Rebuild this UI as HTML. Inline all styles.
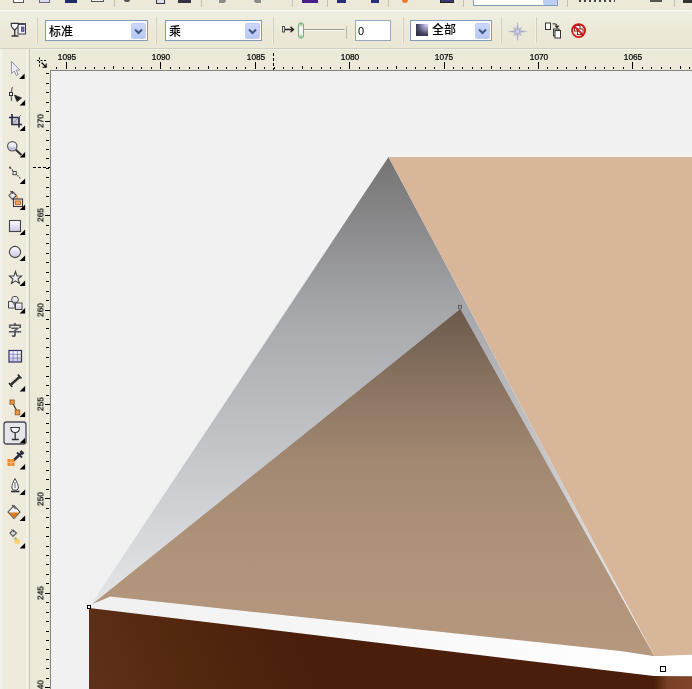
<!DOCTYPE html>
<html lang="zh">
<head>
<meta charset="utf-8">
<title>CorelDRAW</title>
<style>
html,body{margin:0;padding:0;}
body{width:692px;height:689px;overflow:hidden;background:#ECE9D8;position:relative;font-family:"Liberation Sans","Noto Sans CJK SC",sans-serif;}
#top{position:absolute;left:0;top:0;width:692px;height:10px;background:#ECE9D8;overflow:hidden;}
#top i{position:absolute;display:block;}
#prop{position:absolute;left:0;top:10px;width:692px;height:39px;background:linear-gradient(#F1EFE4,#ECE9D8 50%,#EAE7D5);border-top:1px solid #F9F8F3;box-sizing:border-box;border-bottom:1px solid #D3D0BF;}
.combo{position:absolute;top:9px;height:21px;box-sizing:border-box;border:1px solid #7F9DB9;background:#fff;font-size:12px;line-height:18px;color:#000;font-weight:500;}
.combo span{position:absolute;left:3px;top:1.5px;will-change:transform;}
.dd{position:absolute;right:1px;top:2px;width:15px;height:16px;border-radius:1.5px;background:linear-gradient(#CBD8F9,#B7C8F4);border:1px solid #BFCEF6;box-sizing:border-box;}
.dd svg{position:absolute;left:2px;top:4px;}
.sep{position:absolute;top:6px;width:1px;height:26px;background:#D2CFBE;border-left:1px solid #F2F0E6;}
#hr{position:absolute;left:30px;top:49px;width:662px;height:21px;background:#ECE9D8;overflow:hidden;box-shadow:inset 0 1px 0 #F4F3EB}
#vr{position:absolute;left:30px;top:70px;width:20px;height:619px;background:#ECE9D8;overflow:hidden;}
.t{position:absolute;display:block;width:1px;background:#000;}
.hl{position:absolute;top:2.2px;width:30px;height:10px;text-align:center;font-size:8.3px;line-height:10px;color:#000;-webkit-text-stroke:.2px #000;transform:scaleY(1.17);will-change:transform;}
.vl{position:absolute;left:-5.3px;width:30px;height:30px;line-height:30px;text-align:center;font-size:8.3px;color:#000;-webkit-text-stroke:.2px #000;transform:rotate(-90deg) scaleY(1.17);will-change:transform;}
#tb{position:absolute;left:0;top:49px;width:30px;height:640px;background:linear-gradient(90deg,#F3F2EA 0,#F3F2EA 2px,#EEEBDD 3px,#EEEBDD 26px,#F8F7F1 27px,#EEEBDD 28px,#EEEBDD 29px,#C9C6B5 29px);}
#tb svg{position:absolute;left:0;top:0;will-change:transform;}
#cv{position:absolute;left:50px;top:70px;width:642px;height:619px;background:#F1F1F2;overflow:hidden;border-left:1px solid #85857D;border-top:1px solid #85857D;box-sizing:border-box}
</style>
</head>
<body>
<div id="top">
<i style="left:13px;top:0;width:9px;height:2px;border:1px solid #555;border-top:0;background:#fff"></i>
<i style="left:39px;top:0;width:11px;height:3px;border:1px solid #667;border-top:0;background:#D8DCF2;box-sizing:border-box"></i>
<i style="left:65px;top:0;width:12px;height:3px;background:#1F2A6B"></i>
<i style="left:91px;top:0;width:13px;height:2px;border:1px solid #555;border-top:0;background:#F4F4F4;box-sizing:border-box"></i>
<i style="left:114px;top:0;width:1px;height:7px;background:#C5C2B2"></i>
<i style="left:124px;top:0;width:6px;height:2px;background:#555;border-radius:0 0 3px 3px"></i>
<i style="left:156px;top:0;width:9px;height:4px;border:1px solid #334;border-top:0;background:#DDE;box-sizing:border-box"></i>
<i style="left:178px;top:0;width:13px;height:3px;background:#334;"></i>
<i style="left:201px;top:0;width:1px;height:7px;background:#C5C2B2"></i>
<i style="left:219px;top:0;width:7px;height:3px;background:#8A8A8A;border-radius:0 0 4px 1px"></i>
<i style="left:254px;top:0;width:7px;height:3px;background:#8A8A8A;border-radius:0 0 1px 4px"></i>
<i style="left:292px;top:0;width:1px;height:7px;background:#C5C2B2"></i>
<i style="left:302px;top:0;width:16px;height:3px;background:#4B1C8C"></i>
<i style="left:327px;top:0;width:1px;height:7px;background:#C5C2B2"></i>
<i style="left:337px;top:0;width:9px;height:3px;background:#2A2F78"></i>
<i style="left:371px;top:0;width:8px;height:3px;background:#2A2F78"></i>
<i style="left:388px;top:0;width:1px;height:7px;background:#C5C2B2"></i>
<i style="left:402px;top:0;width:6px;height:3px;background:#F07A28;border-radius:0 0 3px 3px"></i>
<i style="left:440px;top:0;width:14px;height:3px;background:#333A70;border:1px solid #222;border-top:0;box-sizing:border-box"></i>
<i style="left:463px;top:0;width:1px;height:7px;background:#C5C2B2"></i>
<i style="left:473px;top:0;width:85px;height:6px;background:#fff;border:1px solid #7F9DB9;border-top:0;box-sizing:border-box"></i>
<i style="left:543px;top:0;width:14px;height:5px;background:#BCCDF6;border-radius:0 0 2px 2px"></i>
<i style="left:567px;top:0;width:1px;height:7px;background:#C5C2B2"></i>
<i style="left:579px;top:0;width:36px;height:2px;background:repeating-linear-gradient(90deg,#444 0 2px,transparent 2px 5px)"></i>
<i style="left:650px;top:0;width:12px;height:2px;background:#555"></i>
<i style="left:674px;top:0;width:1px;height:7px;background:#C5C2B2"></i>
<i style="left:683px;top:0;width:9px;height:3px;background:#333;"></i>
</div>

<div id="prop">
  <svg style="position:absolute;left:10px;top:11px" width="18" height="16" viewBox="10 22 18 16">
    <rect x="18" y="23.500" width="7.500" height="10.500" fill="#F4F3FB" stroke="#3A3A46" stroke-width="1"/>
    <rect x="17.500" y="23" width="8.500" height="2" fill="#4A4A58"/>
    <rect x="21.500" y="27" width="2.500" height="4.500" fill="#6F74B0" stroke="#3A3F80" stroke-width=".7"/>
    <path d="M11.200 23.400 C10.600 27 12.800 28.600 14.700 30 C16.600 28.600 18.800 27 18.200 23.400 Z" fill="#FBFBFE" stroke="#2E2E36" stroke-width="1.100"/>
    <path d="M14.700 29.500 V35.500 M11.500 36 H18.500" stroke="#2E2E36" stroke-width="1.300" fill="none"/>
  </svg>
  <div class="sep" style="left:36px"></div>
  <div class="combo" style="left:45px;width:103px"><span>标准</span><div class="dd"><svg width="9" height="7" viewBox="0 0 9 7"><path d="M1 1.5 L4.5 5 L8 1.5" fill="none" stroke="#43557F" stroke-width="2"/></svg></div></div>
  <div class="combo" style="left:165px;width:97px"><span>乘</span><div class="dd"><svg width="9" height="7" viewBox="0 0 9 7"><path d="M1 1.5 L4.5 5 L8 1.5" fill="none" stroke="#43557F" stroke-width="2"/></svg></div></div>
  <div class="sep" style="left:155px"></div>
  <div class="sep" style="left:272px"></div>
  <svg style="position:absolute;left:281px;top:9px" width="68" height="22" viewBox="281 20 68 22">
    <rect x="282.500" y="26.500" width="2" height="5.500" fill="#E8E8E8" stroke="#444" stroke-width=".9"/>
    <path d="M285 29.500 H293 M290.500 26.800 L293.500 29.500 L290.500 32.200" fill="none" stroke="#222" stroke-width="1.300"/>
    <path d="M304 29.500 H344.500" stroke="#9C9C8E" stroke-width="1"/>
    <path d="M304 30.500 H344.500" stroke="#F8F8F2" stroke-width="1"/>
    <path d="M346.500 26 V39" stroke="#BDBBAC" stroke-width="1"/>
    <rect x="298.500" y="23" width="5" height="15" rx="2" fill="#F2F4F0" stroke="#7FA785"/>
    <path d="M299.500 24 H302.500 M299.500 37 H302.500" stroke="#6FBF6F" stroke-width="1.600"/>
    <path d="M299.500 25.500 H302.500 M299.500 35.500 H302.500" stroke="#B5DDB5" stroke-width="1.400"/>
  </svg>
  <div class="combo" style="left:355px;width:36px;border-color:#94AAC0"><span style="left:2px;top:0.5px;font-size:11px">0</span></div>
  <div class="sep" style="left:402px"></div>
  <div class="combo" style="left:410px;width:82px"><i style="position:absolute;left:5px;top:3px;width:12px;height:12px;background:radial-gradient(circle at 88% 8%,#D4D2F2 0,#8E8CB4 30%,#45445F 60%,#2C2C44 90%);display:block"></i><span style="left:21px;top:0">全部</span><div class="dd"><svg width="9" height="7" viewBox="0 0 9 7"><path d="M1 1.5 L4.5 5 L8 1.5" fill="none" stroke="#43557F" stroke-width="2"/></svg></div></div>
  <div class="sep" style="left:500px"></div>
  <svg style="position:absolute;left:508px;top:11px" width="19" height="19" viewBox="0 0 19 19">
    <path d="M9.500 0.500 L10.400 7 L13.500 5.500 L12 8.600 L18.500 9.500 L12 10.400 L13.500 13.500 L10.400 12 L9.500 18.500 L8.600 12 L5.500 13.500 L7 10.400 L0.500 9.500 L7 8.600 L5.500 5.500 L8.600 7 Z" fill="#B2B2CE" stroke="#A4A4C2" stroke-width=".4"/>
    <path d="M5 5 L14 14 M14 5 L5 14" stroke="#B8B8D2" stroke-width=".7"/>
    <circle cx="9.500" cy="9.500" r="1.600" fill="#D4D4E6"/>
  </svg>
  <div class="sep" style="left:535px"></div>
  <svg style="position:absolute;left:544px;top:10px" width="18" height="18" viewBox="0 0 18 18">
    <rect x="1.500" y="2" width="5" height="6.500" fill="#fff" stroke="#333"/>
    <rect x="9.500" y="8" width="5.500" height="7" fill="#E8E8F0" stroke="#333"/>
    <rect x="11" y="9.500" width="5.500" height="7.500" fill="#fff" stroke="#333"/>
    <path d="M8.500 3 C11.500 2 13.500 3.500 13 6.500 M11 4.500 L13 6.800 L15 4.500" fill="none" stroke="#333" stroke-width="1.100"/>
  </svg>
  <svg style="position:absolute;left:570px;top:11px" width="18" height="18" viewBox="0 0 18 18">
    <rect x="4.500" y="3.500" width="5.500" height="5.500" fill="#fff" stroke="#7A3030"/>
    <rect x="7.500" y="7" width="5.500" height="5.500" fill="#fff" stroke="#7A3030"/>
    <circle cx="8.600" cy="8.600" r="6.500" fill="none" stroke="#D21515" stroke-width="1.800"/>
    <path d="M4 4 L13.200 13.200" stroke="#D21515" stroke-width="1.800"/>
  </svg>
</div>

<div id="hr">
<i class="t" style="left:26px;top:18px;height:2px"></i>
<i class="t" style="left:36px;top:13px;height:7px"></i>
<i class="t" style="left:45px;top:18px;height:2px"></i>
<i class="t" style="left:55px;top:18px;height:2px"></i>
<i class="t" style="left:64px;top:18px;height:2px"></i>
<i class="t" style="left:74px;top:18px;height:2px"></i>
<i class="t" style="left:83px;top:17px;height:3px"></i>
<i class="t" style="left:93px;top:18px;height:2px"></i>
<i class="t" style="left:102px;top:18px;height:2px"></i>
<i class="t" style="left:111px;top:18px;height:2px"></i>
<i class="t" style="left:121px;top:18px;height:2px"></i>
<i class="t" style="left:130px;top:13px;height:7px"></i>
<i class="t" style="left:140px;top:18px;height:2px"></i>
<i class="t" style="left:149px;top:18px;height:2px"></i>
<i class="t" style="left:159px;top:18px;height:2px"></i>
<i class="t" style="left:168px;top:18px;height:2px"></i>
<i class="t" style="left:178px;top:17px;height:3px"></i>
<i class="t" style="left:187px;top:18px;height:2px"></i>
<i class="t" style="left:196px;top:18px;height:2px"></i>
<i class="t" style="left:206px;top:18px;height:2px"></i>
<i class="t" style="left:215px;top:18px;height:2px"></i>
<i class="t" style="left:225px;top:13px;height:7px"></i>
<i class="t" style="left:234px;top:18px;height:2px"></i>
<i class="t" style="left:244px;top:18px;height:2px"></i>
<i class="t" style="left:253px;top:18px;height:2px"></i>
<i class="t" style="left:262px;top:18px;height:2px"></i>
<i class="t" style="left:272px;top:17px;height:3px"></i>
<i class="t" style="left:281px;top:18px;height:2px"></i>
<i class="t" style="left:291px;top:18px;height:2px"></i>
<i class="t" style="left:300px;top:18px;height:2px"></i>
<i class="t" style="left:310px;top:18px;height:2px"></i>
<i class="t" style="left:319px;top:13px;height:7px"></i>
<i class="t" style="left:329px;top:18px;height:2px"></i>
<i class="t" style="left:338px;top:18px;height:2px"></i>
<i class="t" style="left:347px;top:18px;height:2px"></i>
<i class="t" style="left:357px;top:18px;height:2px"></i>
<i class="t" style="left:366px;top:17px;height:3px"></i>
<i class="t" style="left:376px;top:18px;height:2px"></i>
<i class="t" style="left:385px;top:18px;height:2px"></i>
<i class="t" style="left:395px;top:18px;height:2px"></i>
<i class="t" style="left:404px;top:18px;height:2px"></i>
<i class="t" style="left:414px;top:13px;height:7px"></i>
<i class="t" style="left:423px;top:18px;height:2px"></i>
<i class="t" style="left:432px;top:18px;height:2px"></i>
<i class="t" style="left:442px;top:18px;height:2px"></i>
<i class="t" style="left:451px;top:18px;height:2px"></i>
<i class="t" style="left:461px;top:17px;height:3px"></i>
<i class="t" style="left:470px;top:18px;height:2px"></i>
<i class="t" style="left:480px;top:18px;height:2px"></i>
<i class="t" style="left:489px;top:18px;height:2px"></i>
<i class="t" style="left:498px;top:18px;height:2px"></i>
<i class="t" style="left:508px;top:13px;height:7px"></i>
<i class="t" style="left:517px;top:18px;height:2px"></i>
<i class="t" style="left:527px;top:18px;height:2px"></i>
<i class="t" style="left:536px;top:18px;height:2px"></i>
<i class="t" style="left:546px;top:18px;height:2px"></i>
<i class="t" style="left:555px;top:17px;height:3px"></i>
<i class="t" style="left:565px;top:18px;height:2px"></i>
<i class="t" style="left:574px;top:18px;height:2px"></i>
<i class="t" style="left:583px;top:18px;height:2px"></i>
<i class="t" style="left:593px;top:18px;height:2px"></i>
<i class="t" style="left:602px;top:13px;height:7px"></i>
<i class="t" style="left:612px;top:18px;height:2px"></i>
<i class="t" style="left:621px;top:18px;height:2px"></i>
<i class="t" style="left:631px;top:18px;height:2px"></i>
<i class="t" style="left:640px;top:18px;height:2px"></i>
<i class="t" style="left:650px;top:17px;height:3px"></i>
<i class="t" style="left:659px;top:18px;height:2px"></i>
<span class="hl" style="left:21.7px">1095</span>
<span class="hl" style="left:116.1px">1090</span>
<span class="hl" style="left:210.5px">1085</span>
<span class="hl" style="left:304.9px">1080</span>
<span class="hl" style="left:399.3px">1075</span>
<span class="hl" style="left:493.7px">1070</span>
<span class="hl" style="left:588.1px">1065</span>
<svg style="position:absolute;left:6px;top:7px" width="13" height="13" viewBox="36 56 13 13"><path d="M37 60.500 H47 M39.500 57.500 V68" stroke="#000" stroke-dasharray="2 1.500" fill="none"/><path d="M41.500 62.500 L46 67 M46.200 63.500 V67.200 H42.500" stroke="#000" stroke-width="1.100" fill="none"/></svg>
<i class="t" style="left:243px;top:4px;height:17px;background:repeating-linear-gradient(#000 0 3px,transparent 3px 5px)"></i>
</div>
<div id="vr">
<i class="t" style="top:3px;left:15.6px;width:3.8px;height:1px"></i>
<i class="t" style="top:13px;left:16.4px;width:3px;height:1px"></i>
<i class="t" style="top:22px;left:16.4px;width:3px;height:1px"></i>
<i class="t" style="top:32px;left:16.4px;width:3px;height:1px"></i>
<i class="t" style="top:41px;left:16.4px;width:3px;height:1px"></i>
<i class="t" style="top:51px;left:15px;width:5px;height:1px"></i>
<i class="t" style="top:60px;left:16.4px;width:3px;height:1px"></i>
<i class="t" style="top:70px;left:16.4px;width:3px;height:1px"></i>
<i class="t" style="top:79px;left:16.4px;width:3px;height:1px"></i>
<i class="t" style="top:88px;left:16.4px;width:3px;height:1px"></i>
<i class="t" style="top:98px;left:15.6px;width:3.8px;height:1px"></i>
<i class="t" style="top:107px;left:16.4px;width:3px;height:1px"></i>
<i class="t" style="top:117px;left:16.4px;width:3px;height:1px"></i>
<i class="t" style="top:126px;left:16.4px;width:3px;height:1px"></i>
<i class="t" style="top:136px;left:16.4px;width:3px;height:1px"></i>
<i class="t" style="top:145px;left:15px;width:5px;height:1px"></i>
<i class="t" style="top:155px;left:16.4px;width:3px;height:1px"></i>
<i class="t" style="top:164px;left:16.4px;width:3px;height:1px"></i>
<i class="t" style="top:173px;left:16.4px;width:3px;height:1px"></i>
<i class="t" style="top:183px;left:16.4px;width:3px;height:1px"></i>
<i class="t" style="top:192px;left:15.6px;width:3.8px;height:1px"></i>
<i class="t" style="top:202px;left:16.4px;width:3px;height:1px"></i>
<i class="t" style="top:211px;left:16.4px;width:3px;height:1px"></i>
<i class="t" style="top:221px;left:16.4px;width:3px;height:1px"></i>
<i class="t" style="top:230px;left:16.4px;width:3px;height:1px"></i>
<i class="t" style="top:240px;left:15px;width:5px;height:1px"></i>
<i class="t" style="top:249px;left:16.4px;width:3px;height:1px"></i>
<i class="t" style="top:258px;left:16.4px;width:3px;height:1px"></i>
<i class="t" style="top:268px;left:16.4px;width:3px;height:1px"></i>
<i class="t" style="top:277px;left:16.4px;width:3px;height:1px"></i>
<i class="t" style="top:287px;left:15.6px;width:3.8px;height:1px"></i>
<i class="t" style="top:296px;left:16.4px;width:3px;height:1px"></i>
<i class="t" style="top:306px;left:16.4px;width:3px;height:1px"></i>
<i class="t" style="top:315px;left:16.4px;width:3px;height:1px"></i>
<i class="t" style="top:325px;left:16.4px;width:3px;height:1px"></i>
<i class="t" style="top:334px;left:15px;width:5px;height:1px"></i>
<i class="t" style="top:343px;left:16.4px;width:3px;height:1px"></i>
<i class="t" style="top:353px;left:16.4px;width:3px;height:1px"></i>
<i class="t" style="top:362px;left:16.4px;width:3px;height:1px"></i>
<i class="t" style="top:372px;left:16.4px;width:3px;height:1px"></i>
<i class="t" style="top:381px;left:15.6px;width:3.8px;height:1px"></i>
<i class="t" style="top:391px;left:16.4px;width:3px;height:1px"></i>
<i class="t" style="top:400px;left:16.4px;width:3px;height:1px"></i>
<i class="t" style="top:409px;left:16.4px;width:3px;height:1px"></i>
<i class="t" style="top:419px;left:16.4px;width:3px;height:1px"></i>
<i class="t" style="top:428px;left:15px;width:5px;height:1px"></i>
<i class="t" style="top:438px;left:16.4px;width:3px;height:1px"></i>
<i class="t" style="top:447px;left:16.4px;width:3px;height:1px"></i>
<i class="t" style="top:457px;left:16.4px;width:3px;height:1px"></i>
<i class="t" style="top:466px;left:16.4px;width:3px;height:1px"></i>
<i class="t" style="top:476px;left:15.6px;width:3.8px;height:1px"></i>
<i class="t" style="top:485px;left:16.4px;width:3px;height:1px"></i>
<i class="t" style="top:494px;left:16.4px;width:3px;height:1px"></i>
<i class="t" style="top:504px;left:16.4px;width:3px;height:1px"></i>
<i class="t" style="top:513px;left:16.4px;width:3px;height:1px"></i>
<i class="t" style="top:523px;left:15px;width:5px;height:1px"></i>
<i class="t" style="top:532px;left:16.4px;width:3px;height:1px"></i>
<i class="t" style="top:542px;left:16.4px;width:3px;height:1px"></i>
<i class="t" style="top:551px;left:16.4px;width:3px;height:1px"></i>
<i class="t" style="top:561px;left:16.4px;width:3px;height:1px"></i>
<i class="t" style="top:570px;left:15.6px;width:3.8px;height:1px"></i>
<i class="t" style="top:579px;left:16.4px;width:3px;height:1px"></i>
<i class="t" style="top:589px;left:16.4px;width:3px;height:1px"></i>
<i class="t" style="top:598px;left:16.4px;width:3px;height:1px"></i>
<i class="t" style="top:608px;left:16.4px;width:3px;height:1px"></i>
<i class="t" style="top:617px;left:15px;width:5px;height:1px"></i>
<span class="vl" style="top:35.8px">270</span>
<span class="vl" style="top:130.2px">265</span>
<span class="vl" style="top:224.6px">260</span>
<span class="vl" style="top:319.1px">255</span>
<span class="vl" style="top:413.5px">250</span>
<span class="vl" style="top:507.9px">245</span>
<span class="vl" style="top:602.3px">240</span>
<i style="position:absolute;display:block;left:3px;top:97px;width:17px;height:1px;background:repeating-linear-gradient(90deg,#000 0 3px,transparent 3px 5px)"></i>
</div>

<div id="tb">
<!--TOOLS_START-->
<svg width="30" height="640" viewBox="0 49 30 640">
<defs>
<linearGradient id="lav" x1="0" y1="0" x2="0" y2="1"><stop offset="0" stop-color="#FFFFFF"/><stop offset="1" stop-color="#C9C6E6"/></linearGradient>
<path id="fly" d="M4.600 -0.500 V5 H-0.900 Z" fill="#000"/>
</defs>
<!-- pointer -->
<path d="M11.500 61.500 V73.500 L14.300 71 L16.300 75.500 L18.200 74.600 L16.200 70.200 L19.800 70 Z" fill="#EEEDF9" stroke="#9391A6" stroke-width="1"/>
<use href="#fly" x="20" y="74"/>
<!-- shape tool -->
<path d="M12.500 87 C10.500 91 11.500 96 11.500 101" fill="none" stroke="#666" stroke-width="1.200"/>
<rect x="9.500" y="92.500" width="3" height="3" fill="#fff" stroke="#333" stroke-width="1"/>
<path d="M14.500 95 L21.500 98 L17 101.500 Z" fill="#222" stroke="#222" stroke-width=".8"/>
<use href="#fly" x="20.500" y="100.500"/>
<!-- crop -->
<path d="M12 114 V124.500 H22 M9 117.500 H19 V127.500" fill="none" stroke="#2B2B45" stroke-width="1.700"/>
<path d="M13 123.500 L21 115" stroke="#77779A" stroke-width="1"/>
<rect x="13" y="118.500" width="5" height="5" fill="#8C8FC6" opacity=".35"/>
<use href="#fly" x="20.500" y="126"/>
<!-- zoom -->
<circle cx="12.300" cy="146.300" r="4.700" fill="url(#lav)" stroke="#555" stroke-width="1.200"/>
<path d="M9.500 147.500 C11 149 13.500 149 15 147.500" fill="none" stroke="#9A98B8" stroke-width=".9"/>
<path d="M15.800 149.800 L21.500 155" stroke="#333" stroke-width="2.200"/>
<use href="#fly" x="20.500" y="152.500"/>
<!-- freehand -->
<path d="M10 167.500 L21 179" stroke="#333" stroke-width="1.100" stroke-dasharray="1.500 1.200"/>
<rect x="13" y="171.500" width="3.200" height="3.200" fill="#fff" stroke="#333" stroke-width=".9"/>
<circle cx="10" cy="167.500" r="1" fill="#444"/>
<use href="#fly" x="20.500" y="179"/>
<!-- smart fill -->
<path d="M9 195.500 L12.500 191.500 L16.500 195.500 L12.500 199.500 Z" fill="#E8E8F0" stroke="#444" stroke-width="1.100"/>
<path d="M10.500 191 L13 193.500" stroke="#444" stroke-width="1.100"/>
<path d="M16.500 195.500 C17.500 197 17.500 198 17 199" stroke="#E88A30" stroke-width="1.400" fill="none"/>
<rect x="13.500" y="199" width="9" height="7.500" fill="#F6E6D6" stroke="#3A3340" stroke-width="1.100"/>
<rect x="15.500" y="201" width="5" height="3.500" fill="#F0A868" stroke="#B8641E" stroke-width=".9"/>
<use href="#fly" x="20.500" y="205"/>
<!-- rectangle -->
<rect x="9.500" y="220.500" width="11" height="11" fill="url(#lav)" stroke="#444" stroke-width="1.100"/>
<use href="#fly" x="20.500" y="230"/>
<!-- ellipse -->
<circle cx="15" cy="252" r="5.600" fill="url(#lav)" stroke="#444" stroke-width="1.100"/>
<use href="#fly" x="20.500" y="256"/>
<!-- star -->
<path d="M15.500 271.500 L17 276 L21.500 276 L18 279 L19.500 283.500 L15.500 280.800 L11.500 283.500 L13 279 L9.500 276 L14 276 Z" fill="#F4F3FB" stroke="#444" stroke-width="1.100"/>
<use href="#fly" x="20.500" y="281"/>
<!-- basic shapes -->
<path d="M8.500 301.500 H13 L15.500 308 H8.500 Z" fill="#ECEBF6" stroke="#444" stroke-width="1"/>
<circle cx="15" cy="299.700" r="3.400" fill="url(#lav)" stroke="#444" stroke-width="1"/>
<rect x="15.500" y="303" width="6.500" height="6.500" fill="url(#lav)" stroke="#444" stroke-width="1"/>
<use href="#fly" x="20.500" y="308.500"/>
<!-- text -->
<text x="8" y="334.500" font-family="'Liberation Sans','Noto Sans CJK SC',sans-serif" font-size="14" font-weight="bold" fill="#55555F">字</text>
<!-- table -->
<rect x="9" y="350.500" width="12.500" height="11.500" fill="url(#lav)" stroke="#2E2E5E" stroke-width="1.200"/>
<path d="M13.200 350.500 V362 M17.400 350.500 V362 M9 354.300 H21.500 M9 358.100 H21.500" stroke="#7C7CBC" stroke-width=".8"/>
<!-- dimension -->
<path d="M10.500 385 L20 376.500" stroke="#333" stroke-width="2.400"/>
<path d="M9 383 L12.300 387 M17.800 374.500 L21.500 378.500" stroke="#333" stroke-width="1.800"/>
<use href="#fly" x="20.500" y="386.500"/>
<!-- connector -->
<path d="M12 402 L17.500 412" stroke="#333" stroke-width="1.200"/>
<rect x="10" y="400" width="4.200" height="4.200" fill="#E89A4A" stroke="#9A5A1E" stroke-width=".9"/>
<rect x="15.200" y="410" width="4.500" height="4.800" fill="#E89A4A" stroke="#9A5A1E" stroke-width=".9"/>
<use href="#fly" x="20.500" y="412"/>
<!-- transparency active -->
<rect x="4" y="422" width="22" height="22" rx="2.500" fill="#E6E6EA" stroke="#4A4A58" stroke-width="1.300"/>
<path d="M10.800 427.500 H19.500 C19.500 431 17.500 432.500 15.200 432.500 C12.800 432.500 10.800 431 10.800 427.500 Z" fill="#fff" stroke="#333" stroke-width="1.100"/>
<path d="M15.200 432.500 V439.500 M11.800 439.500 H18.800" stroke="#333" stroke-width="1.300"/>
<use href="#fly" x="20.500" y="438.200"/>
<!-- eyedropper -->
<path d="M22 452.500 L13.500 460.500" stroke="#2E2E3E" stroke-width="2.600"/>
<path d="M17 452.500 L22 457.500" stroke="#2E2E3E" stroke-width="1.800"/>
<path d="M20.500 451 L23.500 454" stroke="#2E2E3E" stroke-width="2.500"/>
<rect x="7.500" y="459" width="7" height="7" fill="#E88A2E"/>
<path d="M11 459 V466 M7.500 462.500 H14.500" stroke="#F6C48E" stroke-width=".8"/>
<use href="#fly" x="20.500" y="464.500"/>
<!-- outline pen -->
<path d="M15 478.500 C13 482 11.800 485 11.800 488 L13 490 H17.200 L18.400 488 C18.400 485 17 482 15 478.500 Z" fill="#F6F6FA" stroke="#444" stroke-width="1"/>
<path d="M15 482 V488" stroke="#555" stroke-width=".9"/>
<path d="M11 491.500 H19.500" stroke="#2A2A3A" stroke-width="1.600"/>
<use href="#fly" x="20.500" y="490"/>
<!-- fill -->
<path d="M8 512 L14 505.500 L20 512 L14 518.500 Z" fill="#F2F0F6" stroke="#444" stroke-width="1.100"/>
<path d="M8.800 512.500 H19.200 L14 518 Z" fill="#E07A1E"/>
<path d="M12 505 L15.500 509" stroke="#444" stroke-width="1.100"/>
<use href="#fly" x="20.500" y="516"/>
<!-- interactive fill -->
<path d="M10 533 L13 530 L16.500 533 L13 536.500 Z" fill="#D8D8DE" stroke="#555" stroke-width="1.100"/>
<path d="M11.500 529.500 L14 532" stroke="#555" stroke-width="1"/>
<circle cx="17" cy="541.500" r="2.800" fill="#F8D060" opacity=".9"/>
<circle cx="15.500" cy="538.500" r="1.300" fill="#9AB88A"/>
<use href="#fly" x="20.500" y="543.500"/>
</svg>
<!--TOOLS_END-->
</div>

<div id="cv">
<svg width="642" height="619" viewBox="50 70 642 619" style="position:absolute;left:-1px;top:-1px">
<defs>
<linearGradient id="gg" x1="0" y1="157" x2="0" y2="656" gradientUnits="userSpaceOnUse">
<stop offset="0" stop-color="#747474"/><stop offset=".15" stop-color="#8C8C8E"/><stop offset=".3" stop-color="#A5A6AA"/><stop offset=".45" stop-color="#B6B7BB"/><stop offset=".6" stop-color="#C5C6CA"/><stop offset=".8" stop-color="#DBDCDF"/><stop offset="1" stop-color="#F0F0F0"/>
</linearGradient>
<linearGradient id="bg" x1="0" y1="309" x2="0" y2="656" gradientUnits="userSpaceOnUse">
<stop offset="0" stop-color="#6B594B"/><stop offset=".22" stop-color="#8A7461"/><stop offset=".45" stop-color="#A38972"/><stop offset=".7" stop-color="#AF937A"/><stop offset="1" stop-color="#B5987E"/>
</linearGradient>
<linearGradient id="dg" x1="80" y1="700" x2="290" y2="615" gradientUnits="userSpaceOnUse">
<stop offset="0" stop-color="#60321D"/><stop offset=".5" stop-color="#54270F"/><stop offset="1" stop-color="#4A1E0B"/>
</linearGradient>
<linearGradient id="wg" x1="89" y1="0" x2="660" y2="0" gradientUnits="userSpaceOnUse">
<stop offset="0" stop-color="#F0F0F0"/><stop offset="1" stop-color="#FFFFFF"/>
</linearGradient>
<linearGradient id="rg" x1="654" y1="0" x2="692" y2="0" gradientUnits="userSpaceOnUse"><stop offset="0" stop-color="#4A1D0A"/><stop offset=".12" stop-color="#5A2812"/><stop offset=".35" stop-color="#7A4025"/><stop offset="1" stop-color="#804528"/></linearGradient>
</defs>
<rect x="50" y="70" width="642" height="619" fill="#F1F1F1"/>
<polygon points="388.500,157 89.500,606.500 654.500,656.500" fill="url(#gg)"/>
<polygon points="460.300,309 93,603.500 110,597 622,652 654.500,656.500" fill="url(#bg)"/>
<polygon points="388.500,157 692,157 692,655 654.500,656.200" fill="#D8B699"/>
<polygon points="89,607 110,596.600 622,651.300 654.500,656.200 692,654.800 692,689 89,689" fill="url(#wg)"/>
<polygon points="89,608 658,676.500 658,689 89,689" fill="url(#dg)"/>
<polygon points="654,676 692,676.300 692,689 654,689" fill="url(#rg)"/>
<rect x="87.500" y="605.500" width="3" height="3" fill="#fff" stroke="#000"/>
<rect x="458.500" y="305.500" width="3" height="3" fill="none" stroke="#444" stroke-width=".7"/>
<rect x="660.500" y="666.500" width="5" height="5" fill="#fff" stroke="#000"/>
</svg>
</div>
</body>
</html>
